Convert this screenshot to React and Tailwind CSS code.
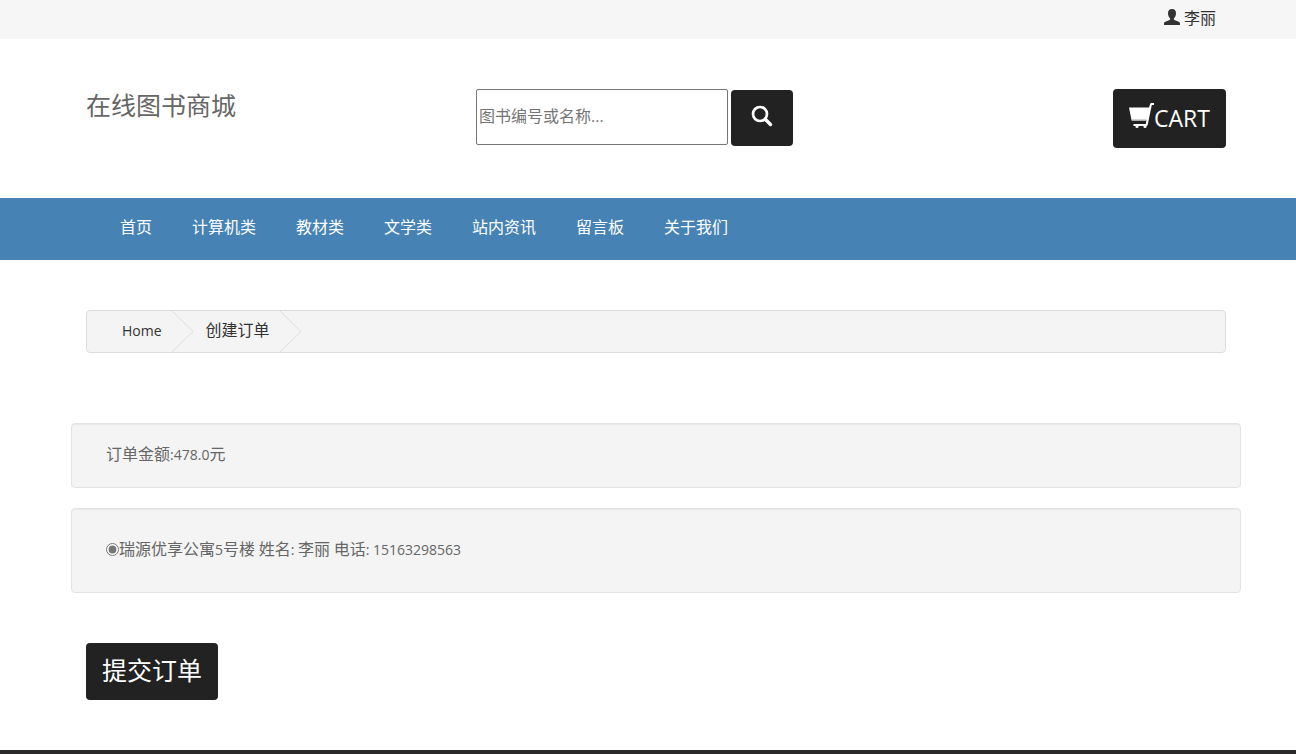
import React, { useState } from 'react';

const NAV_ITEMS = ['首页', '计算机类', '教材类', '文学类', '站内资讯', '留言板', '关于我们'];

const ADDRESSES = [
  { id: 1, street: '瑞源优享公寓', number: '5', building: '号楼', name: '李丽', phone: '15163298563' },
];

export default function CreateOrder() {
  const [keyword, setKeyword] = useState('');
  const [addressId, setAddressId] = useState(1);

  return (
    <div className="min-h-screen bg-white text-base text-[#666] font-['Open_Sans','Noto_Sans_CJK_SC',sans-serif]">
      <div className="bg-[#f6f6f6]">
        <Container className="flex justify-end px-[25px] pt-1.5 pb-[9px]">
          <a href="#user" className="flex items-start gap-1 leading-6 text-[#333]">
            <UserIcon />
            李丽
          </a>
        </Container>
      </div>

      <header>
        <Container className="grid grid-cols-3 items-start px-[15px] pt-[50px] pb-[50px]">
          <h1 className="text-[25px] leading-8">
            <a href="#home">在线图书商城</a>
          </h1>

          <form className="flex items-start gap-[3px] pl-[10px]" onSubmit={(e) => e.preventDefault()}>
            <input
              type="text"
              aria-label="图书编号或名称"
              placeholder="图书编号或名称..."
              value={keyword}
              onChange={(e) => setKeyword(e.target.value)}
              className="h-14 w-[252px] min-w-0 rounded-xs border border-[#767676] px-0.5 pb-0.5 outline-none placeholder:text-[#757575]"
            />
            <button
              type="submit"
              aria-label="搜索"
              className="mt-px flex h-14 w-[62px] shrink-0 items-center justify-center rounded bg-[#222] pb-1 text-white"
            >
              <SearchIcon />
            </button>
          </form>

          <a
            href="#cart"
            className="flex h-[59px] items-center justify-self-end rounded bg-[#222] px-4 text-[23px] font-medium text-white"
          >
            <CartIcon />
            CART
          </a>
        </Container>
      </header>

      <nav className="bg-[#4682b4]">
        <Container className="px-[15px]">
          <ul className="flex flex-wrap gap-10 px-[34px] pt-[17px] pb-[21px]">
            {NAV_ITEMS.map((item) => (
              <li key={item}>
                <a href="#category" className="block leading-6 text-white">{item}</a>
              </li>
            ))}
          </ul>
        </Container>
      </nav>

      <main className="py-[50px]">
        <Container className="px-[15px]">
          <ol className="flex h-[43px] rounded border border-[#ddd] bg-[#f4f4f4] pl-[35px] text-[#333]">
            <Crumb><span className="text-sm">Home</span></Crumb>
            <Crumb>创建订单</Crumb>
          </ol>
        </Container>

        <Container className="mt-[70px] space-y-5">
          <Well className="pt-[18px] pb-[21px]">
            <p className="leading-6">
              订单金额<span className="text-sm">:478.0</span>元
            </p>
          </Well>
          <Well className="pt-[28px] pb-[31px]">
            {ADDRESSES.map((address) => (
              <label key={address.id} className="flex items-center leading-6">
                <input
                  type="radio"
                  name="address"
                  checked={addressId === address.id}
                  onChange={() => setAddressId(address.id)}
                  className="size-[13px] accent-[#767676]"
                />
                <span>
                  {address.street}<span className="text-sm">{address.number}</span>{address.building}
                  <span className="text-sm"> </span>姓名<span className="text-sm">: </span>{address.name}
                  <span className="text-sm"> </span>电话<span className="text-sm">: {address.phone}</span>
                </span>
              </label>
            ))}
          </Well>
        </Container>

        <Container className="px-[15px] pt-[50px]">
          <button type="button" className="h-[57px] rounded bg-[#222] px-4 pb-0.5 text-[25px] text-white">
            提交订单
          </button>
        </Container>
      </main>

      <footer className="h-1 bg-[#2b2929]"></footer>
    </div>
  );
}

function Container({ className = '', children }) {
  return (
    <div className="mx-auto max-w-[1186px] pl-4">
      <div className={className}>{children}</div>
    </div>
  );
}

function Well({ className, children }) {
  return (
    <div className={`rounded border border-[#e3e3e3] bg-[#f4f4f4] px-[34px] shadow-[inset_0_1px_1px_rgba(0,0,0,0.05)] ${className}`}>
      {children}
    </div>
  );
}

function Crumb({ children }) {
  return (
    <li className="flex items-start">
      <a href="#crumb" className="pt-[7px] pr-[10px] leading-6">{children}</a>
      <svg width="22" height="41" viewBox="0 0 22 41" fill="none" stroke="#ddd" className="mr-3 shrink-0" aria-hidden="true">
        <path d="M0 0 L21 20.5 L0 41" />
      </svg>
    </li>
  );
}

function UserIcon() {
  return (
    <svg width="16" height="16" viewBox="0 0 16 16" fill="currentColor" className="mt-[3px]" aria-hidden="true">
      <path d="M8 0C5.400 0 4 1.600 4 4.200c0 2.200.8 3.900 1.900 5 .4.600.4 1.400-.3 1.800L1.300 12.700C.4 13.100 0 13.700 0 14.600V16h16v-1.400c0-.9-.4-1.500-1.300-1.900L10.400 11c-.7-.4-.7-1.200-.3-1.800 1.100-1.100 1.900-2.800 1.900-5C12 1.600 10.600 0 8 0z" />
    </svg>
  );
}

function SearchIcon() {
  return (
    <svg width="22" height="22" viewBox="0 0 22 22" fill="none" stroke="currentColor" aria-hidden="true">
      <circle cx="9" cy="9" r="7" strokeWidth="2.700" />
      <path d="M14.500 14.500l5 5" strokeWidth="3.400" strokeLinecap="round" />
    </svg>
  );
}

function CartIcon() {
  return (
    <svg width="25" height="32" viewBox="0 0 25 32" fill="currentColor" aria-hidden="true">
      <path d="M0 4.500h20L21.200.8Q21.400 0 22.200 0H25v2h-2.200l-4 19.500Q18.500 23 17 23H4.500v-2h12.300l.5-3.500H2.600z" />
      <path d="M2.600 16.500h15l-.3 1.500H3z" fill="#aaa" />
      <path d="M6.500 23h3v1q0 1-1.500 1t-1.500-1zM14.500 23h3v1q0 1-1.500 1t-1.500-1z" />
    </svg>
  );
}
